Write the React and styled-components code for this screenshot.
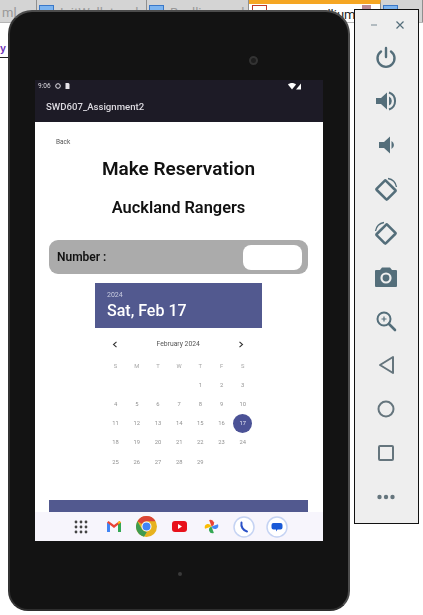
import React from "react";
import styled, { createGlobalStyle } from "styled-components";

const GlobalStyle = createGlobalStyle`
  html, body {
    margin: 0;
    padding: 0;
    background: #fff;
    font-family: Roboto, "Liberation Sans", sans-serif;
  }
`;

const Desktop = styled.div`
  position: relative;
  width: 423px;
  height: 615px;
  overflow: hidden;
  background: #fff;
`;

/* the IDE behind the emulator */
const TabStrip = styled.div`
  display: flex;
  align-items: flex-start;
  height: 23px;
  background: #d4d4d4;
  border-bottom: 1px solid #b5b5b5;
  box-sizing: border-box;
  font-size: 13px;
  color: #555;
`;

const Tab = styled.div`
  display: flex;
  align-items: flex-start;
  gap: 6px;
  box-sizing: border-box;
  width: ${(p) => p.$w}px;
  height: 22px;
  padding-left: ${(p) => p.$pad || 0}px;
  padding-top: ${(p) => (p.$active ? 1 : 5)}px;
  border-right: 1px solid #8f8f8f;
  white-space: nowrap;
  overflow: hidden;
  background: ${(p) => (p.$active ? "#fff" : "transparent")};
  border-top: ${(p) => (p.$active ? "4px solid #f5a623" : "none")};
`;

const TabIcon = styled.span`
  width: 15px;
  height: 10px;
  flex: none;
  box-sizing: border-box;
  background: ${(p) => p.$fill};
  border: 1px solid ${(p) => p.$line};
`;

const TabLabel = styled.span`
  margin-top: ${(p) => (p.$active ? 2 : 0)}px;
  line-height: 15px;
  color: ${(p) => (p.$active ? "#222" : "#999")};
`;

const TabClose = styled.span`
  flex: none;
  width: 9px;
  height: 9px;
  margin: 0 9px 0 auto;
  background: #b98a98;
`;

const CodeHint = styled.div`
  position: absolute;
  left: 0;
  top: 44px;
  width: 8px;
  height: 13px;
  border-bottom: 1px solid #222;
  font-family: "Liberation Mono", monospace;
  font-size: 10px;
  font-weight: 700;
  color: #6a2fb5;
`;

const Device = styled.div`
  position: absolute;
  left: 8px;
  top: 10px;
  width: 342px;
  height: 601px;
  box-sizing: border-box;
  padding: 68px 25px 0 25px;
  background: #131313;
  border: 2px solid #4c4c4c;
  border-bottom-color: #2e2e2e;
  border-left-color: #333;
  border-radius: 24px 24px 20px 20px;
`;

const Camera = styled.div`
  position: absolute;
  left: 239px;
  top: 44px;
  width: 9px;
  height: 9px;
  box-sizing: border-box;
  border-radius: 50%;
  background: #1d1d1d;
  border: 2px solid #333;
`;

const Sensor = styled.div`
  position: absolute;
  left: 168px;
  top: 560px;
  width: 4px;
  height: 4px;
  border-radius: 50%;
  background: #3a3a3a;
`;

const Screen = styled.div`
  position: relative;
  display: flex;
  flex-direction: column;
  width: 288px;
  height: 461px;
  overflow: hidden;
  background: #fff;
  filter: blur(0.35px);
`;

const AppBar = styled.div`
  flex: none;
  height: 42px;
  box-sizing: border-box;
  background: #1d1b26;
  color: #dcdae0;
`;

const StatusRow = styled.div`
  display: flex;
  align-items: center;
  gap: 4px;
  height: 12px;
  padding: 0 21px 0 3px;
  font-size: 6.5px;
`;

const StatusSpacer = styled.div`
  flex: 1;
`;

const AppTitle = styled.div`
  padding: 7px 0 0 11px;
  font-size: 9.6px;
  font-weight: 500;
  line-height: 16px;
`;

const Content = styled.div`
  flex: 1;
  display: flex;
  flex-direction: column;
  align-items: center;
  padding: 0 15px 0 14px;
  color: #111;
`;

const BackLink = styled.div`
  align-self: flex-start;
  margin: 16px 0 0 7px;
  font-size: 6.5px;
  line-height: 8px;
  color: #555;
`;

const Title = styled.h1`
  margin: 10px 0 0;
  font-size: 19px;
  line-height: 26px;
  font-weight: 600;
`;

const Subtitle = styled.h2`
  margin: 15px 0 0;
  font-size: 16.4px;
  line-height: 22px;
  font-weight: 600;
`;

const NumberBar = styled.div`
  display: flex;
  align-items: center;
  justify-content: space-between;
  align-self: stretch;
  box-sizing: border-box;
  height: 34px;
  margin-top: 21px;
  padding: 0 6px 0 8px;
  border-radius: 9px;
  background: #ababab;
  font-size: 12px;
  font-weight: 600;
`;

const NumberInput = styled.div`
  width: 59px;
  height: 25px;
  border-radius: 8px;
  background: #fff;
`;

const DateHeader = styled.div`
  align-self: flex-start;
  box-sizing: border-box;
  width: 167px;
  height: 45px;
  margin: 9px 0 0 46px;
  padding: 8px 0 0 12px;
  background: #52598f;
  color: #fff;
`;

const DateYear = styled.div`
  font-size: 7px;
  line-height: 9px;
  color: #c9cce0;
`;

const DateBig = styled.div`
  margin-top: 1px;
  font-size: 16px;
  font-weight: 500;
  line-height: 19px;
`;

const Calendar = styled.div`
  align-self: flex-start;
  width: 148.4px;
  margin: 8px 0 0 57px;
`;

const MonthRow = styled.div`
  display: flex;
  align-items: center;
  justify-content: space-between;
  height: 16px;
  padding: 0 10px 0 6px;
  font-size: 6.8px;
  color: #555;
`;

const DayGrid = styled.div`
  display: grid;
  grid-template-columns: repeat(7, 21.2px);
  grid-auto-rows: 19.2px;
  margin-top: 4px;
  margin-left: -1px;
`;

const Day = styled.div`
  display: flex;
  align-items: center;
  justify-content: center;
  font-size: 5.8px;
  color: ${(p) => (p.$head ? "#a5a5a5" : "#919191")};
`;

const Selected = styled.span`
  display: flex;
  align-items: center;
  justify-content: center;
  width: 19px;
  height: 19px;
  border-radius: 50%;
  background: #4b5296;
  color: #e8e8f4;
`;

const SaveButton = styled.div`
  flex: none;
  align-self: stretch;
  height: 12px;
  margin-top: auto;
  background: #52598f;
`;

const NavBar = styled.div`
  flex: none;
  display: flex;
  align-items: center;
  justify-content: center;
  height: 29px;
  background: #f7f5fc;
`;

const NavSlot = styled.div`
  display: flex;
  align-items: center;
  justify-content: center;
  width: 32.6px;
`;

const Dock = styled.div`
  position: absolute;
  left: 354px;
  top: 9px;
  display: flex;
  flex-direction: column;
  align-items: center;
  box-sizing: border-box;
  width: 65px;
  height: 515px;
  background: #eeeeee;
  border: 1px solid #111;
`;

const DockTop = styled.div`
  display: flex;
  justify-content: center;
  gap: 14px;
  margin-top: 8px;
  height: 14px;
`;

const DockList = styled.div`
  display: flex;
  flex-direction: column;
  align-items: center;
  gap: 20px;
  margin-top: 13px;
  margin-right: 1px;
  color: #546e7a;
`;

const DockIcon = styled.svg`
  display: block;
  flex: none;
  width: 24px;
  height: 24px;
`;

const Dots = () => (
  <svg width="14" height="14" viewBox="0 0 14 14">
    {[2, 7, 12].flatMap((y) =>
      [2, 7, 12].map((x) => <circle key={`${x}-${y}`} cx={x} cy={y} r="1.4" fill="#444" />)
    )}
  </svg>
);

const Gmail = () => (
  <svg width="16" height="13" viewBox="0 0 16 13">
    <path d="M1 12V2.5L4 4v8z" fill="#4285f4" />
    <path d="M12 12V4l3-1.5V12z" fill="#34a853" />
    <path d="M1 2.5 8 8l7-5.5-1.500-1.500L8 5 2.500 1z" fill="#ea4335" />
    <path d="M12 4l3-1.500-1.500-1.500L12 2z" fill="#fbbc04" />
  </svg>
);

const Chrome = () => (
  <svg width="21" height="21" viewBox="0 0 21 21">
    <circle cx="10.5" cy="10.500" r="10.5" fill="#e7b21f" />
    <path d="M10.500 0A10.500 10.500 0 0 1 19.600 5.250H10.500A5.250 5.250 0 0 0 5.900 8L1.400 5.200A10.500 10.500 0 0 1 10.500 0z" fill="#db4437" />
    <path d="M1.400 5.200 5.900 13A5.250 5.250 0 0 0 11 15.700L8 20.700A10.500 10.500 0 0 1 1.400 5.200z" fill="#3f9b50" />
    <circle cx="10.5" cy="10.500" r="5" fill="#fff" />
    <circle cx="10.500" cy="10.500" r="4" fill="#4285f4" />
  </svg>
);

const YouTube = () => (
  <svg width="15" height="11" viewBox="0 0 15 11">
    <rect width="15" height="11" rx="3" fill="#e8111b" />
    <path d="M6 3v5l4-2.500z" fill="#fff" />
  </svg>
);

const Photos = () => (
  <svg width="17" height="17" viewBox="0 0 16 16">
    <path d="M8 8V1.500a3.500 3.500 0 0 1 3.500 3.500A3.500 3.500 0 0 1 8 8z" fill="#ea4335" transform="rotate(-20 8 8)" />
    <path d="M8 8h6.500a3.500 3.500 0 0 1-3.500 3.500A3.500 3.500 0 0 1 8 8z" fill="#4285f4" transform="rotate(-20 8 8)" />
    <path d="M8 8v6.500a3.500 3.500 0 0 1-3.500-3.500A3.500 3.500 0 0 1 8 8z" fill="#34a853" transform="rotate(-20 8 8)" />
    <path d="M8 8H1.500A3.500 3.500 0 0 1 5 4.500 3.500 3.500 0 0 1 8 8z" fill="#fbbc04" transform="rotate(-20 8 8)" />
  </svg>
);

const Phone = () => (
  <svg width="22" height="22" viewBox="0 0 22 22">
    <circle cx="11" cy="11" r="10" fill="#fff" stroke="#c5d3f3" strokeWidth="1.500" />
    <path d="M8.500 6.500c-.800 4 1.500 8 5.500 9" fill="none" stroke="#2b52c8" strokeWidth="2" strokeLinecap="round" />
  </svg>
);

const Messages = () => (
  <svg width="22" height="22" viewBox="0 0 22 22">
    <circle cx="11" cy="11" r="10" fill="#fff" stroke="#c5d3f3" strokeWidth="1.500" />
    <path d="M7.500 7h7a2 2 0 0 1 2 2v2.500a2 2 0 0 1-2 2H11.500L10 15.500v-2H7.500a2 2 0 0 1-2-2V9a2 2 0 0 1 2-2z" fill="#1a5ad7" />
  </svg>
);

const Chevron = ({ left }) => (
  <svg width="6" height="7" viewBox="0 0 6 7">
    <path d={left ? "M4.500 .8 1.500 3.500l3 2.700" : "M1.500 .8l3 2.700-3 2.700"} fill="none" stroke="#333" strokeWidth="1.100" />
  </svg>
);

const dockIcons = [
  <>
    <path d="M12 3v9" stroke="currentColor" strokeWidth="2.400" strokeLinecap="round" fill="none" />
    <path d="M7 6.500a8.500 8.500 0 1 0 10 0" stroke="currentColor" strokeWidth="2.400" strokeLinecap="round" fill="none" />
  </>,
  <>
    <path d="M2 9h5l6-5.500v17L7 15H2z" fill="currentColor" />
    <path d="M15 7.500a5 5 0 0 1 0 9z" fill="currentColor" />
    <path d="M15 3.500a9 9 0 0 1 0 17" fill="none" stroke="currentColor" strokeWidth="2" />
  </>,
  <>
    <path d="M5 9h5l6-5.500v17L10 15H5z" fill="currentColor" />
    <path d="M17.500 8a4.500 4.500 0 0 1 0 8z" fill="currentColor" />
  </>,
  <>
    <rect x="5.500" y="5.500" width="13" height="15" rx="1" transform="rotate(-45 12 13)" fill="none" stroke="currentColor" strokeWidth="2.600" />
    <path d="M14 1.500a10.500 10.500 0 0 1 8.500 8.500" fill="none" stroke="currentColor" strokeWidth="1.300" />
  </>,
  <>
    <rect x="5.500" y="5.500" width="13" height="15" rx="1" transform="rotate(45 12 13)" fill="none" stroke="currentColor" strokeWidth="2.600" />
    <path d="M10 1.500A10.500 10.500 0 0 0 1.500 10" fill="none" stroke="currentColor" strokeWidth="1.300" />
  </>,
  <>
    <path d="M8 2.500h8L18 5h4a1 1 0 0 1 1 1v15a1 1 0 0 1-1 1H2a1 1 0 0 1-1-1V6a1 1 0 0 1 1-1h4z" fill="currentColor" />
    <circle cx="12" cy="13" r="4.500" fill="none" stroke="#eee" strokeWidth="2.200" />
  </>,
  <>
    <circle cx="10" cy="10" r="6.500" fill="none" stroke="currentColor" strokeWidth="2" />
    <path d="M15 15l6 6" stroke="currentColor" strokeWidth="2.600" strokeLinecap="round" />
    <path d="M10 7.500v5M7.500 10h5" stroke="currentColor" strokeWidth="1.200" />
  </>,
  <path d="M19 4v16L6 12z" fill="none" stroke="#65757d" strokeWidth="2" strokeLinejoin="round" />,
  <circle cx="12" cy="12" r="7.500" fill="none" stroke="#65757d" strokeWidth="2" />,
  <rect x="5" y="5" width="14" height="14" rx="1" fill="none" stroke="#65757d" strokeWidth="2" />,
  <g fill="#65757d">
    <circle cx="5.500" cy="12" r="2.200" />
    <circle cx="12" cy="12" r="2.200" />
    <circle cx="18.500" cy="12" r="2.200" />
  </g>,
];

const navIcons = [Dots, Gmail, Chrome, YouTube, Photos, Phone, Messages];
const weekdays = ["S", "M", "T", "W", "T", "F", "S"];
const blanks = [0, 1, 2, 3];
const days = Array.from({ length: 29 }, (_, i) => i + 1);

const App = () => {
  return (
    <Desktop>
      <GlobalStyle />
      <TabStrip>
        <Tab $w={37} $pad={2}>
          <TabLabel>ml</TabLabel>
        </Tab>
        <Tab $w={110} $pad={2}>
          <TabIcon $fill="#7db4ef" $line="#3a78c8" />
          <TabLabel>InitWallet.xml</TabLabel>
        </Tab>
        <Tab $w={102} $pad={2}>
          <TabIcon $fill="#7db4ef" $line="#3a78c8" />
          <TabLabel>Reallium.xml</TabLabel>
        </Tab>
        <Tab $w={132} $pad={3} $active>
          <TabIcon $fill="#fff" $line="#c0392b" />
          <TabLabel $active>Suite Reallium</TabLabel>
          <TabClose />
        </Tab>
        <Tab $w={42} $pad={2}>
          <TabIcon $fill="#7db4ef" $line="#3a78c8" />
        </Tab>
      </TabStrip>
      <CodeHint>y</CodeHint>

      <Device>
        <Camera />
        <Sensor />
        <Screen>
          <AppBar>
            <StatusRow>
              <span>9:06</span>
              <svg width="6" height="6" viewBox="0 0 6 6">
                <circle cx="3" cy="3" r="2.300" fill="none" stroke="#e6e3ea" />
              </svg>
              <svg width="5" height="6" viewBox="0 0 5 6">
                <path d="M.5 0h3l1 1v5h-4z" fill="#e6e3ea" />
              </svg>
              <StatusSpacer />
              <svg width="14" height="7" viewBox="0 0 14 7">
                <path d="M0 1.500C2-.5 6-.5 8 1.500L4 6.500z" fill="#fff" />
                <path d="M13 .5v6H8z" fill="#fff" />
              </svg>
            </StatusRow>
            <AppTitle>SWD607_Assignment2</AppTitle>
          </AppBar>
          <Content>
            <BackLink>Back</BackLink>
            <Title>Make Reservation</Title>
            <Subtitle>Auckland Rangers</Subtitle>
            <NumberBar>
              Number :
              <NumberInput />
            </NumberBar>
            <DateHeader>
              <DateYear>2024</DateYear>
              <DateBig>Sat, Feb 17</DateBig>
            </DateHeader>
            <Calendar>
              <MonthRow>
                <Chevron left />
                <span>February 2024</span>
                <Chevron />
              </MonthRow>
              <DayGrid>
                {weekdays.map((d, i) => (
                  <Day key={i} $head>{d}</Day>
                ))}
                {blanks.map((b) => (
                  <Day key={`blank-${b}`} />
                ))}
                {days.map((d) => (
                  <Day key={d}>{d === 17 ? <Selected>{d}</Selected> : d}</Day>
                ))}
              </DayGrid>
            </Calendar>
            <SaveButton />
          </Content>
          <NavBar>
            {navIcons.map((Icon, i) => (
              <NavSlot key={i}>
                <Icon />
              </NavSlot>
            ))}
          </NavBar>
        </Screen>
      </Device>

      <Dock>
        <DockTop>
          <svg width="12" height="14" viewBox="0 0 12 14">
            <path d="M3 7h6" stroke="#8a9aa2" strokeWidth="1.200" />
          </svg>
          <svg width="12" height="14" viewBox="0 0 12 14">
            <path d="M2.500 3.500l7 7M9.500 3.500l-7 7" stroke="#546e7a" strokeWidth="1.200" />
          </svg>
        </DockTop>
        <DockList>
          {dockIcons.map((icon, i) => (
            <DockIcon key={i} viewBox="0 0 24 24">
              {icon}
            </DockIcon>
          ))}
        </DockList>
      </Dock>
    </Desktop>
  );
};

export default App;
